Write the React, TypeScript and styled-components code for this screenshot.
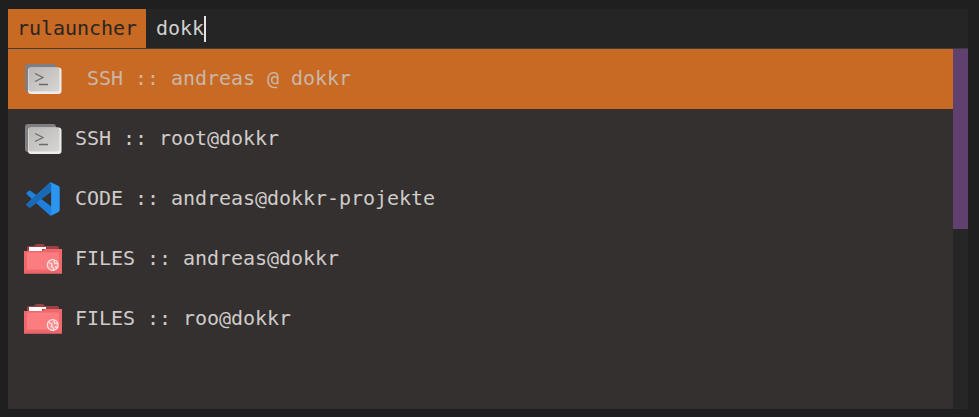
import styled, { createGlobalStyle } from "styled-components";

const GlobalStyle = createGlobalStyle`
  html, body {
    margin: 0;
    padding: 0;
    height: 100%;
    background: #1f1f1f;
  }
`;

const Window = styled.div`
  width: 979px;
  height: 417px;
  box-sizing: border-box;
  padding: 9px 11px 8px 8px;
  display: flex;
  flex-direction: column;
  background: #1f1f1f;
  font-family: "DejaVu Sans Mono", monospace;
  font-size: 20px;
  letter-spacing: -0.04px;
  overflow: hidden;
`;

const SearchBar = styled.div`
  height: 40px;
  box-sizing: border-box;
  display: flex;
  align-items: stretch;
  flex-shrink: 0;
  background: #252525;
  border-bottom: 1px solid #3f3b3b;
`;

const Prompt = styled.div`
  width: 138px;
  box-sizing: border-box;
  padding: 0 0 2px 9px;
  display: flex;
  align-items: center;
  background: #c96a24;
  color: #2a2522;
`;

const Query = styled.div`
  padding: 0 0 2px 10px;
  display: flex;
  align-items: center;
  color: #d0d0d0;
`;

const Caret = styled.span`
  width: 2px;
  height: 26px;
  margin-top: 2px;
  background: #e4e4e4;
`;

const Body = styled.div`
  flex: 1;
  display: flex;
  min-height: 0;
`;

const List = styled.div`
  flex: 1;
  background: #343030;
`;

const Row = styled.div<{ $selected?: boolean }>`
  height: 60px;
  box-sizing: border-box;
  padding-left: 16px;
  display: flex;
  align-items: center;
  gap: ${(p) => (p.$selected ? "25px" : "13px")};
  background: ${(p) => (p.$selected ? "#c96a24" : "transparent")};
  color: ${(p) => (p.$selected ? "#c9b6a6" : "#cfcbc8")};
  white-space: pre;
`;

const Label = styled.span`
  margin-bottom: 2px;
`;

const IconSlot = styled.div`
  width: 38px;
  height: 38px;
  flex-shrink: 0;
  display: flex;
`;

const Scrollbar = styled.div`
  width: 15px;
  background: #262626;
`;

const Thumb = styled.div`
  height: 180px;
  background: #60406e;
`;

function TerminalIcon() {
  return (
    <svg width="38" height="38" viewBox="0 0 38 38">
      <defs>
        <linearGradient id="keyFace" x1="0" y1="0" x2="1" y2="1">
          <stop offset="0" stopColor="#b9b6b4" />
          <stop offset="1" stopColor="#d8d6d4" />
        </linearGradient>
      </defs>
      <rect x="1" y="4" width="31" height="28" rx="3" fill="#7f7f83" />
      <rect x="4" y="7.500" width="33.500" height="26.500" rx="3" fill="#efedeb" />
      <rect x="4.500" y="7.500" width="31" height="24" rx="2.500" fill="url(#keyFace)" />
      <path d="M11 13.500l8 4-8 4" fill="none" stroke="#6b6a6a" strokeWidth="1.200" />
      <path d="M15 24.500h9" stroke="#6b6a6a" strokeWidth="1.500" />
    </svg>
  );
}

function CodeIcon() {
  return (
    <svg width="38" height="38" viewBox="-7.500 -7.500 115 115">
      <path
        d="M96.400 10.800 75.800.9a6.200 6.200 0 0 0-7.100 1.200L29.300 38 12.100 25a4.200 4.200 0 0 0-5.300.2l-5.500 5a4.200 4.200 0 0 0 0 6.200L16.200 50 1.300 63.600a4.200 4.200 0 0 0 0 6.200l5.500 5a4.200 4.200 0 0 0 5.300.2l17.200-13 39.400 35.900a6.200 6.200 0 0 0 7.100 1.200l20.600-9.900a6.200 6.200 0 0 0 3.500-5.600V16.400a6.200 6.200 0 0 0-3.500-5.600zM75 72.700 45.100 50 75 27.300z"
        fill="#1f7fdc"
      />
      <path
        d="M75.800.9a6.200 6.200 0 0 0-7.100 1.200L1.300 63.600a4.200 4.200 0 0 0 0 6.200l5.500 5a4.200 4.200 0 0 0 5.300.2L75 27.300V1z"
        fill="#1a69b4"
      />
      <path
        d="M70.900 99.300a6.200 6.200 0 0 0 4.900-.2l20.600-9.900a6.200 6.200 0 0 0 3.500-5.600V16.400a6.200 6.200 0 0 0-3.500-5.600L75.800.9a6.200 6.200 0 0 0-5-.2 6.200 6.200 0 0 1 4.200 5.800V93.500a6.200 6.200 0 0 1-4.100 5.800z"
        fill="#2a96ef"
      />
    </svg>
  );
}

function FolderIcon() {
  return (
    <svg width="38" height="38" viewBox="0 0 38 38">
      <path d="M3 8q0-2 2-2h5q1-2 3-2h5q2 0 3 2h12q2 0 2 2v6H3z" fill="#9a4347" />
      <rect x="5" y="7" width="13" height="4.500" fill="#fff" />
      <rect x="18" y="7" width="4" height="2" fill="#fff" />
      <path d="M0 11h18l3-2h17v24.500H0z" fill="#ef686c" />
      <rect x="3" y="12.500" width="32" height="17" rx="1" fill="#fb7d80" />
      <rect x="0" y="31.500" width="38" height="2" fill="#e9666a" />
      <circle cx="28.700" cy="25" r="5.400" fill="#f98f90" stroke="#fde3e3" strokeWidth="1.200" />
      <path
        d="M25 22.500l3 1.500-.5 2.500 2 1.500v3M30 20.500l.5 2.500 3 1M31 27l2.500.5"
        fill="none"
        stroke="#fde3e3"
        strokeWidth="1.300"
      />
    </svg>
  );
}

const results = [
  { icon: <TerminalIcon />, label: "SSH :: andreas @ dokkr", selected: true },
  { icon: <TerminalIcon />, label: "SSH :: root@dokkr" },
  { icon: <CodeIcon />, label: "CODE :: andreas@dokkr-projekte" },
  { icon: <FolderIcon />, label: "FILES :: andreas@dokkr" },
  { icon: <FolderIcon />, label: "FILES :: roo@dokkr" },
];

export default function App() {
  return (
    <Window>
      <GlobalStyle />
      <SearchBar>
        <Prompt>rulauncher</Prompt>
        <Query>
          dokk
          <Caret />
        </Query>
      </SearchBar>
      <Body>
        <List>
          {results.map((result) => (
            <Row key={result.label} $selected={result.selected}>
              <IconSlot>{result.icon}</IconSlot>
              <Label>{result.label}</Label>
            </Row>
          ))}
        </List>
        <Scrollbar>
          <Thumb />
        </Scrollbar>
      </Body>
    </Window>
  );
}
